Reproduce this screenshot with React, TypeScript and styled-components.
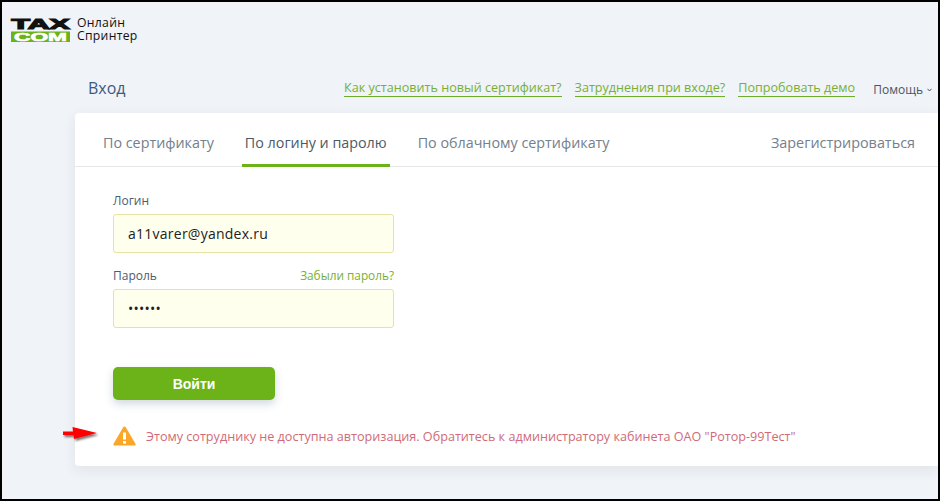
import React from "react";
import styled, { createGlobalStyle } from "styled-components";

const Global = createGlobalStyle`
  html, body { margin: 0; padding: 0; background: #000; }
  body { font-family: "Open Sans", "Noto Sans", sans-serif; }
  * { box-sizing: border-box; }
`;

const Frame = styled.div`
  width: 940px;
  height: 501px;
  border-style: solid;
  border-color: #000;
  border-width: 2px 2px 2px 2px;
  background: #f0f3f7;
  overflow: hidden;
  display: flex;
  flex-direction: column;
`;

const Brand = styled.header`
  display: flex;
  align-items: flex-start;
  gap: 6px;
  height: 31px;
  margin: 13px 0 0 9px;
`;

const LogoMark = styled.svg`
  margin-top: 2px;
  overflow: visible;
  flex: none;
`;

const BrandText = styled.div`
  font-family: "Open Sans", sans-serif;
  font-size: 12.2px;
  font-weight: 500;
  line-height: 13px;
  margin-top: 1px;
  color: #111;
  letter-spacing: 0.3px;
`;

const TopBar = styled.div`
  display: flex;
  align-items: center;
  height: 36px;
  margin: 24px 0 0 0;
  padding: 0 6px 0 86px;
`;

const Title = styled.h1`
  margin: 0;
  font-size: 16px;
  font-weight: 400;
  color: #3d5a80;
  flex: 1;
`;

const TopLink = styled.a`
  font-size: 12.6px;
  line-height: 17px;
  color: #77b035;
  border-bottom: 1px solid #6fae2a;
  margin-right: 13px;
`;

const Help = styled.span`
  font-size: 12px;
  color: #4a5563;
  margin: 3px 0 0 5px;
  display: flex;
  align-items: center;
  gap: 4px;
`;

const Card = styled.main`
  margin: 7px 0 0 73px;
  height: 353px;
  background: #fff;
  border-radius: 4px 0 0 4px;
  box-shadow: 0 4px 14px rgba(40, 60, 90, 0.08);
  display: flex;
  flex-direction: column;
`;

const Tabs = styled.nav`
  display: flex;
  height: 54px;
  border-bottom: 1px solid #e6e8ec;
  padding: 0 23px 0 25px;
`;

const Tab = styled.div<{ $active?: boolean }>`
  font-size: 14.32px;
  line-height: 20px;
  padding: 20px 3px 0;
  margin-right: 25px;
  height: 54px;
  color: ${(p) => (p.$active ? "#4c5a68" : "#74808c")};
  border-bottom: 3px solid ${(p) => (p.$active ? "#6cb319" : "transparent")};
`;

const Register = styled.div`
  margin-left: auto;
  font-size: 14.4px;
  line-height: 20px;
  padding-top: 20px;
  color: #74808c;
`;

const Form = styled.form`
  width: 281px;
  margin: 24px 0 0 38px;
  display: flex;
  flex-direction: column;
`;

const LabelRow = styled.div`
  display: flex;
  justify-content: space-between;
  align-items: center;
  height: 18px;
  margin-bottom: 5px;
`;

const Label = styled.label`
  font-size: 12px;
  color: #4c5d70;
`;

const Forgot = styled.a`
  font-size: 11.8px;
  color: #77b035;
`;

const Field = styled.div`
  height: 39px;
  padding: 0 14px;
  display: flex;
  align-items: center;
  background: #ffffee;
  border: 1px solid #e6e2a4;
  border-radius: 3px;
  color: #222;
  font-size: 14px;
  letter-spacing: 0.25px;
  margin-bottom: 13px;
`;

const Button = styled.button`
  width: 162px;
  height: 33px;
  margin-top: 26px;
  background: #6cb319;
  color: #fff;
  border: 0;
  border-radius: 5px;
  font-family: "Liberation Sans", sans-serif;
  font-size: 14px;
  font-weight: 700;
  box-shadow: 0 4px 9px rgba(50, 80, 120, 0.22);
`;

const Alert = styled.div`
  display: flex;
  align-items: center;
  margin: 26px 0 0 38px;
  gap: 10px;
  position: relative;
`;

const AlertText = styled.span`
  font-size: 12.62px;
  color: #cf6b78;
  white-space: nowrap;
`;

const Arrow = styled.svg`
  position: absolute;
  left: -50px;
  top: 0;
`;

const Logo = () => (
  <LogoMark width="60" height="25" viewBox="0 0 60 25">
    <text x="0.5" y="12" fontFamily="Liberation Sans" fontWeight="700" fontSize="15" fill="#111" stroke="#111" strokeWidth="1.2" textLength="58" lengthAdjust="spacingAndGlyphs">TAX</text>
    <rect x="0" y="14.5" width="59" height="10.5" fill="#6cb319" />
    <text x="3" y="23.5" fontFamily="Liberation Sans" fontWeight="700" fontSize="11.5" fill="#fff" stroke="#fff" strokeWidth="0.6" textLength="53" lengthAdjust="spacingAndGlyphs">COM</text>
  </LogoMark>
);

export default function App() {
  return (
    <>
      <Global />
      <Frame>
        <Brand>
          <Logo />
          <BrandText>Онлайн<br />Спринтер</BrandText>
        </Brand>
        <TopBar>
          <Title>Вход</Title>
          <TopLink>Как установить новый сертификат?</TopLink>
          <TopLink>Затруднения при входе?</TopLink>
          <TopLink>Попробовать демо</TopLink>
          <Help>
            Помощь
            <svg width="5" height="4" viewBox="0 0 5 4"><path d="M.5 .8 2.5 3 4.5 .8" fill="none" stroke="#4a5563" strokeWidth="1" /></svg>
          </Help>
        </TopBar>
        <Card>
          <Tabs>
            <Tab>По сертификату</Tab>
            <Tab $active>По логину и паролю</Tab>
            <Tab>По облачному сертификату</Tab>
            <Register>Зарегистрироваться</Register>
          </Tabs>
          <Form>
            <LabelRow><Label>Логин</Label></LabelRow>
            <Field>a11varer@yandex.ru</Field>
            <LabelRow><Label>Пароль</Label><Forgot>Забыли пароль?</Forgot></LabelRow>
            <Field>••••••</Field>
            <Button type="button">Войти</Button>
          </Form>
          <Alert>
            <Arrow width="36" height="18" viewBox="0 0 36 18">
              <defs>
                <filter id="s" x="-30%" y="-30%" width="160%" height="180%"><feDropShadow dx="1.5" dy="2" stdDeviation="1.2" floodColor="#000" floodOpacity="0.55" /></filter>
              </defs>
              <path d="M0 5.5H10L9.5 1 34 7 11 13 10.5 9H0Z" fill="#f00" filter="url(#s)" />
            </Arrow>
            <svg width="23" height="20" viewBox="0 0 23 20">
              <path d="M11.5 0.5 Q12.3 0.5 12.9 1.4 L22.6 18 Q23 19.5 21.6 19.5 H1.4 Q0 19.5 0.4 18 L10.1 1.4 Q10.7 0.5 11.5 0.5Z" fill="#faa629" />
              <rect x="10" y="6.5" width="3" height="7" fill="#fff" />
              <rect x="10" y="15" width="3" height="2.6" fill="#fff" />
            </svg>
            <AlertText>Этому сотруднику не доступна авторизация. Обратитесь к администратору кабинета ОАО "Ротор-99Тест"</AlertText>
          </Alert>
        </Card>
      </Frame>
    </>
  );
}
